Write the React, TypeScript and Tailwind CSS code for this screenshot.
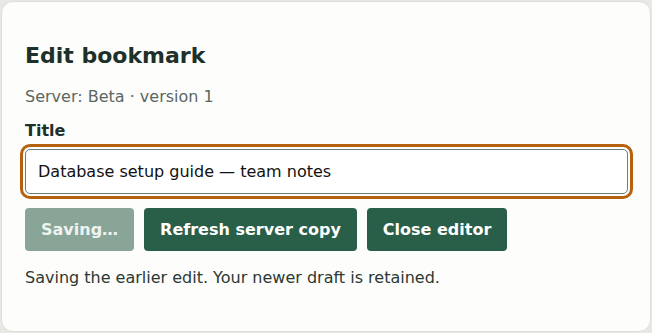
export default function App() {
  return (
    <div className="w-[652px] h-[333px] bg-[#e7eae4] p-px font-['DejaVu_Sans',sans-serif]">
      <div className="h-full rounded-[12px] border border-[#dcdfd8] bg-[#fdfdfc] px-[23px] pt-[40px]">
        <h2 className="text-[22px] leading-[28px] font-bold text-[#1d302a]">Edit bookmark</h2>
        <p className="mt-[17px] text-[16px] leading-[20px] text-[#5b6762]">Server: Beta · version 1</p>
        <label className="mt-[14px] block text-[16px] leading-[20px] font-bold text-[#1d302a]">Title</label>
        <input
          className="mt-[8px] block h-[45px] w-[603px] rounded-[5px] border border-[#6f7d77] bg-white px-[12px] text-[16px] text-[#111] outline-[3px] outline-offset-[2px] outline-[#b5620f] outline-solid"
          defaultValue="Database setup guide — team notes"
        />
        <div className="mt-[14px] flex gap-[10px]">
          <button className="h-[43px] rounded-[4px] bg-[#89a598] px-[16px] text-[16px] font-bold text-[#eef3f0]">
            Saving…
          </button>
          <button className="h-[43px] rounded-[4px] bg-[#295e48] px-[16px] text-[16px] font-bold text-white">
            Refresh server copy
          </button>
          <button className="h-[43px] rounded-[4px] bg-[#295e48] px-[16px] text-[16px] font-bold text-white">
            Close editor
          </button>
        </div>
        <p className="mt-[17px] text-[16px] leading-[20px] text-[#2b3833]">
          Saving the earlier edit. Your newer draft is retained.
        </p>
      </div>
    </div>
  )
}
